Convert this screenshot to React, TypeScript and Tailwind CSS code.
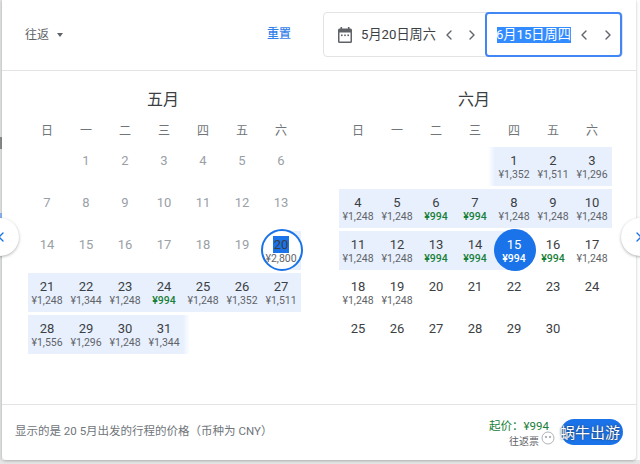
import React from "react";
import { ChevronLeft, ChevronRight } from "lucide-react";

type Day = { d?: number; p?: string; kind?: string };

const p = (d: number, price?: string, kind?: string): Day => ({ d, p: price, kind });

const MAY: Day[] = [
  {}, p(1), p(2), p(3), p(4), p(5), p(6),
  p(7), p(8), p(9), p(10), p(11), p(12), p(13),
  p(14), p(15), p(16), p(17), p(18), p(19), p(20, "¥2,800", "start"),
  p(21, "¥1,248"), p(22, "¥1,344"), p(23, "¥1,248"), p(24, "¥994"), p(25, "¥1,248"), p(26, "¥1,352"), p(27, "¥1,511"),
  p(28, "¥1,556"), p(29, "¥1,296"), p(30, "¥1,248"), p(31, "¥1,344", "fadeEnd"),
];

const JUNE: Day[] = [
  {}, {}, {}, {}, p(1, "¥1,352", "fadeStart"), p(2, "¥1,511"), p(3, "¥1,296"),
  p(4, "¥1,248"), p(5, "¥1,248"), p(6, "¥994"), p(7, "¥994"), p(8, "¥1,248"), p(9, "¥1,248"), p(10, "¥1,248"),
  p(11, "¥1,248"), p(12, "¥1,248"), p(13, "¥994"), p(14, "¥994"), p(15, "¥994", "end"), p(16, "¥994", "after"), p(17, "¥1,248", "after"),
  p(18, "¥1,248", "after"), p(19, "¥1,248", "after"), p(20), p(21), p(22), p(23), p(24),
  p(25), p(26), p(27), p(28), p(29), p(30),
];

const WEEK = ["日", "一", "二", "三", "四", "五", "六"];

function Cell({ day, past }: { day: Day; past: boolean }) {
  if (!day.d) return <div />;
  const green = day.p === "¥994";
  if (day.kind === "start") {
    return (
      <div className="relative flex flex-col items-center bg-[linear-gradient(90deg,transparent_50%,#e8f0fe_50%)] pr-px pt-[5px]">
        <div className="absolute left-[-1px] top-[-2px] h-[42px] w-[42px] rounded-full border-2 border-[#1a73e8] bg-white" />
        <span className="relative bg-[#1a73e8] px-px text-[13px] leading-[17px] text-[#3c4043]">{day.d}</span>
        <span className="relative text-[10.5px] leading-[12px] text-[#5f6368]">{day.p}</span>
      </div>
    );
  }
  if (day.kind === "end") {
    return (
      <div className="relative flex flex-col items-center bg-[linear-gradient(90deg,#e8f0fe_50%,transparent_50%)] pr-px pt-[5px]">
        <div className="absolute left-[-1px] top-[-2px] h-[42px] w-[42px] rounded-full bg-[#1a73e8]" />
        <span className="relative text-[13px] leading-[17px] text-white">{day.d}</span>
        <span className="relative text-[10.5px] font-medium leading-[12px] text-white">{day.p}</span>
      </div>
    );
  }
  let bg = "pr-px";
  if (day.p && day.kind !== "after") bg = "pr-px bg-[#e8f0fe]";
  // the highlighted range runs a little past its first and last day, fading out
  if (day.kind === "fadeEnd") bg = "-mr-[6px] pr-[7px] bg-[linear-gradient(270deg,#fff,#e8f0fe_7px)]";
  if (day.kind === "fadeStart") bg = "-ml-[7px] pl-[7px] pr-px bg-[linear-gradient(90deg,#fff,#e8f0fe_7px)]";
  return (
    <div className={`flex flex-col items-center pt-[5px] ${bg}`}>
      <span className={`text-[13px] leading-[17px] ${past ? "text-[#9aa0a6]" : "text-[#3c4043]"}`}>{day.d}</span>
      {day.p && (
        <span className={`text-[10.5px] leading-[11px] ${green ? "font-medium text-[#188038]" : "text-[#5f6368]"}`}>{day.p}</span>
      )}
    </div>
  );
}

function Month({ title, days, past }: { title: string; days: Day[]; past: boolean }) {
  return (
    <div className="w-[273px]">
      <div className="pr-[3px] pt-[17px] text-center text-base leading-6 text-[#3c4043]">{title}</div>
      <div className="mt-[9px] grid grid-cols-[repeat(7,39px)]">
        {WEEK.map((w) => (
          <div key={w} className="pr-px text-center text-xs leading-5 text-[#70757a]">{w}</div>
        ))}
      </div>
      <div className="mt-[6px] grid grid-cols-[repeat(7,39px)] auto-rows-[39px] gap-y-[3px]">
        {days.map((day, i) => (
          <Cell key={i} day={day} past={past && !day.p} />
        ))}
      </div>
    </div>
  );
}

function EventIcon() {
  return (
    <svg width="14" height="16" viewBox="0 0 14 16" className="shrink-0" fill="#5f6368">
      <rect x="2.5" y="0" width="1.6" height="3" />
      <rect x="9.9" y="0" width="1.6" height="3" />
      <path d="M1.5 1.5h11a1.5 1.5 0 0 1 1.5 1.5v11.5a1.5 1.5 0 0 1-1.5 1.5h-11A1.5 1.5 0 0 1 0 14.5V3a1.5 1.5 0 0 1 1.5-1.5zM1.5 5.5v9h11v-9z" fillRule="evenodd" />
      <rect x="3" y="7.5" width="1.6" height="1.6" />
      <rect x="6.2" y="7.5" width="1.6" height="1.6" />
      <rect x="9.4" y="7.5" width="1.6" height="1.6" />
    </svg>
  );
}

export default function App() {
  return (
    <div className="relative h-[464px] w-[640px] overflow-hidden bg-white font-['Roboto','Noto_Sans_CJK_SC',sans-serif]">
      <div className="absolute inset-y-0 left-0 w-[2px] bg-[#e2e2e2]">
        <div className="mt-[137px] h-[12px] bg-[#8a8a8a]" />
        <div className="mt-[64px] h-[8px] bg-[#8ab4f8]" />
      </div>
      <div className="absolute inset-x-0 bottom-0 h-[4px] bg-[#e6e6e6]" />

      <div className="absolute left-[2px] top-0 h-[460px] w-[634px] rounded-b bg-white shadow-[0_1px_3px_rgba(60,64,67,0.35)]">
        <div className="flex h-[71px] items-center border-b border-[#e3e3e3] pb-px">
          <div className="ml-[23px] flex w-[52px] items-center text-xs text-[#5f6368]">
            往返
            <span className="ml-[8px] h-0 w-0 border-x-[3.5px] border-t-[4px] border-x-transparent border-t-[#5f6368]" />
          </div>
          <div className="mb-[2px] ml-[190px] w-[56px] text-xs font-medium text-[#1a73e8] opacity-90">重置</div>
          <div className="flex h-[45px] w-[300px] rounded border border-[#e3e3e3]">
            <div className="flex w-[162px] items-center pl-[14px] text-[13.2px] text-[#3c4043]">
              <EventIcon />
              <span className="ml-[9px] whitespace-nowrap">5月20日周六</span>
              <ChevronLeft size={16} className="ml-[5px] shrink-0 text-[#5f6368]" />
              <ChevronRight size={16} className="ml-[7px] shrink-0 text-[#5f6368]" />
            </div>
            <div className="-my-px flex w-[138px] items-center rounded border-2 border-[#4285f4] pl-[10px] text-[13.2px]">
              <span className="w-[74px] overflow-hidden whitespace-nowrap bg-[#338cff] text-right leading-[16px] text-white [direction:rtl]"><bdi>6月15日周四</bdi></span>
              <ChevronLeft size={16} className="ml-[5px] shrink-0 text-[#5f6368]" />
              <ChevronRight size={16} className="ml-[8px] shrink-0 text-[#5f6368]" />
            </div>
          </div>
        </div>

        <div className="flex h-[333px] gap-[38px] pl-[26px]">
          <Month title="五月" days={MAY} past />
          <Month title="六月" days={JUNE} past={false} />
        </div>

        <div className="flex h-[56px] border-t border-[#e3e3e3] pl-[13px]">
          <span className="mt-[18px] text-[11.5px] leading-[16px] text-[#70757a]">显示的是 20 5月出发的行程的价格（币种为 CNY）</span>
          <div className="ml-auto mr-[87px] mt-[13px] text-[11.5px] leading-[16px] text-[#188038]">起价：¥994</div>
          <button className="absolute bottom-[15px] right-[13px] h-[26px] w-[62px] rounded-full bg-[#1a73e8]" />
        </div>
      </div>

      <div className="absolute left-[-19px] top-[218px] flex h-[38px] w-[38px] items-center justify-end rounded-full bg-white pr-[10px] shadow-[0_1px_3px_rgba(60,64,67,0.4)]">
        <ChevronLeft size={16} className="shrink-0 text-[#1a73e8]" />
      </div>
      <div className="absolute left-[621px] top-[218px] flex h-[38px] w-[38px] items-center rounded-full bg-white pl-[10px] shadow-[0_1px_3px_rgba(60,64,67,0.4)]">
        <ChevronRight size={16} className="shrink-0 text-[#1a73e8]" />
      </div>

      {/* watermark sits over the footer */}
      <div className="absolute left-[509px] top-[435px] text-[10px] leading-[14px] text-[#5f6368] [text-shadow:0_0_2px_#fff]">往返票</div>
      <svg className="absolute left-[541px] top-[431px]" width="14" height="14" viewBox="0 0 14 14" fill="none" stroke="#9aa0a6" strokeWidth="0.8">
        <circle cx="7" cy="7" r="6" fill="#fff" />
        <circle cx="5" cy="6" r="0.7" fill="#9aa0a6" />
        <circle cx="9" cy="6" r="0.7" fill="#9aa0a6" />
      </svg>
      <div className="absolute left-[560px] top-[423px] text-[15px] leading-[20px] text-white [text-shadow:0_0_2px_#333]">蜗牛出游</div>
    </div>
  );
}
